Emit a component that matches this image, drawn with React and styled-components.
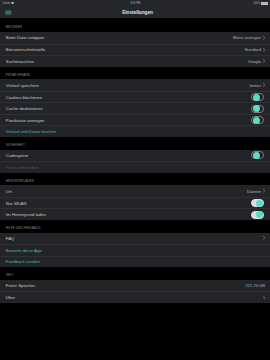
import React from "react";
import styled, { createGlobalStyle } from "styled-components";

const GlobalStyle = createGlobalStyle`
  html, body { margin: 0; padding: 0; background: #000; }
  body { font-family: "Liberation Sans", Arial, sans-serif; -webkit-font-smoothing: antialiased; }
  * { box-sizing: border-box; }
`;

const Screen = styled.div`
  width: 270px;
  height: 360px;
  background: #000;
  display: flex;
  flex-direction: column;
  overflow: hidden;
`;

const TopBar = styled.div`
  background: #24262a;
  height: 18px;
  display: flex;
  flex-direction: column;
`;

const StatusBar = styled.div`
  height: 6px;
  padding: 0 2px 0 2.5px;
  display: grid;
  grid-template-columns: 1fr auto 1fr;
  align-items: center;
  font-size: 2.6px;
  color: #bdbdbd;
`;

const StatusLeft = styled.div`
  display: flex;
  align-items: center;
  gap: 1px;
`;

const StatusRight = styled.div`
  display: flex;
  align-items: center;
  justify-content: flex-end;
  gap: 1px;
`;

const Battery = styled.div`
  width: 7px;
  height: 3px;
  border: 0.4px solid #c8c8c8;
  border-radius: 0.6px;
  padding: 0.4px;
  position: relative;
  &::before {
    content: "";
    display: block;
    width: 100%;
    height: 100%;
    background: #4cd964;
  }
  &::after {
    content: "";
    position: absolute;
    right: -1.2px;
    top: 0.7px;
    width: 0.8px;
    height: 1.2px;
    background: #c8c8c8;
  }
`;

const NavBar = styled.div`
  height: 12px;
  display: grid;
  grid-template-columns: 30px 1fr 30px;
  align-items: center;
  padding: 0 0 0 5px;
`;

const NavTitle = styled.div`
  text-align: center;
  color: #e6e6e8;
  font-size: 4.7px;
  font-weight: 600;
  margin-top: 0.5px;
`;

const Content = styled.div`
  display: flex;
  flex-direction: column;
`;

const SectionHeader = styled.div`
  height: ${(p) => (p.$first ? "14px" : "12.75px")};
  display: flex;
  align-items: flex-end;
  padding: 0 0 2.4px 5.8px;
  color: #86868a;
  font-size: 3.1px;
  letter-spacing: 0.05px;
  line-height: 3.2px;
`;

const Group = styled.div`
  background: #222428;
  display: flex;
  flex-direction: column;
`;

const Row = styled.div`
  height: 11.5px;
  display: flex;
  align-items: center;
  justify-content: space-between;
  padding: 0 5px 0 5.8px;
  font-size: 4.3px;
  border-top: ${(p) => (p.$first ? "none" : "0.5px solid #2e3034")};
`;

const Label = styled.span`
  color: ${(p) =>
    p.$tone === "link" ? "#4fb9a6" : p.$tone === "muted" ? "#55585c" : "#c9c9cc"};
`;

const Right = styled.div`
  display: flex;
  align-items: center;
  gap: 1.8px;
  color: #b0b0b3;
  font-size: 4.1px;
`;

const Chevron = styled.svg`
  width: 2.2px;
  height: 3.6px;
  display: block;
`;

const Toggle = styled.div`
  width: 13px;
  height: 8px;
  border-radius: 4px;
  border: 0.6px solid ${(p) => (p.$on ? "#dcdcdc" : "#7e8084")};
  background: ${(p) => (p.$on ? "#dcdcdc" : "#1c1e21")};
  display: flex;
  align-items: center;
  justify-content: ${(p) => (p.$on ? "flex-end" : "flex-start")};
  padding: 0.1px;
  margin-right: 0.6px;
`;

const Knob = styled.div`
  width: 7px;
  height: 7px;
  border-radius: 50%;
  background: #5adcc5;
`;

const ChevronIcon = () => (
  <Chevron viewBox="0 0 6 10">
    <path d="M1 1 L5 5 L1 9" fill="none" stroke="#bdbdc0" strokeWidth="1.3" strokeLinecap="round" strokeLinejoin="round" />
  </Chevron>
);

const MenuIcon = () => (
  <svg width="6.5" height="5" viewBox="0 0 13 10" style={{ display: "block" }}>
    <rect x="0" y="0" width="13" height="10" rx="1" fill="#2c433e" />
    <rect x="1" y="1.5" width="11" height="1.4" fill="#46877a" />
    <rect x="1" y="4.3" width="11" height="1.4" fill="#46877a" />
    <rect x="1" y="7.1" width="11" height="1.4" fill="#46877a" />
  </svg>
);

const WifiIcon = () => (
  <svg width="3.2" height="2.4" viewBox="0 0 12 9" style={{ display: "block" }}>
    <path d="M6 9 L0 2.5 A9 9 0 0 1 12 2.5 Z" fill="#bdbdbd" />
  </svg>
);

const sections = [
  {
    title: "BROWSER",
    rows: [
      { label: "Beim Datei antippen", value: "Menü anzeigen", chevron: true },
      { label: "Benutzerschnittstelle", value: "Standard", chevron: true },
      { label: "Suchmaschine", value: "Google", chevron: true },
    ],
  },
  {
    title: "PRIVATSPHÄRE",
    rows: [
      { label: "Verlauf speichern", value: "Immer", chevron: true },
      { label: "Cookies blockieren", toggle: false },
      { label: "Cache deaktivieren", toggle: false },
      { label: "Paniktaste anzeigen", toggle: false },
      { label: "Verlauf und Daten löschen", tone: "link" },
    ],
  },
  {
    title: "SICHERHEIT",
    rows: [
      { label: "Codesperre", toggle: false },
      { label: "Passcode ändern", tone: "muted" },
    ],
  },
  {
    title: "HERUNTERLADEN",
    rows: [
      { label: "Ort", value: "Dateien", chevron: true },
      { label: "Nur WLAN", toggle: true },
      { label: "Im Hintergrund laden", toggle: true },
    ],
  },
  {
    title: "HILFE UND FEEDBACK",
    rows: [
      { label: "FAQ", chevron: true },
      { label: "Bewerte diese App", tone: "link" },
      { label: "Feedback senden", tone: "link" },
    ],
  },
  {
    title: "INFO",
    rows: [
      { label: "Freier Speicher", value: "217,74 GB" },
      { label: "Über", chevron: true },
    ],
  },
];

export default function App() {
  return (
    <>
      <GlobalStyle />
      <Screen>
        <TopBar>
          <StatusBar>
            <StatusLeft>
              <span>Carrier</span>
              <WifiIcon />
            </StatusLeft>
            <span>8:53 PM</span>
            <StatusRight>
              <span>100%</span>
              <Battery />
            </StatusRight>
          </StatusBar>
          <NavBar>
            <MenuIcon />
            <NavTitle>Einstellungen</NavTitle>
            <span />
          </NavBar>
        </TopBar>
        <Content>
          {sections.map((s, si) => (
            <React.Fragment key={s.title}>
              <SectionHeader $first={si === 0}>{s.title}</SectionHeader>
              <Group>
                {s.rows.map((r, ri) => (
                  <Row key={r.label} $first={ri === 0}>
                    <Label $tone={r.tone}>{r.label}</Label>
                    {r.toggle !== undefined ? (
                      <Toggle $on={r.toggle}>
                        <Knob />
                      </Toggle>
                    ) : r.value || r.chevron ? (
                      <Right>
                        {r.value && <span>{r.value}</span>}
                        {r.chevron && <ChevronIcon />}
                      </Right>
                    ) : null}
                  </Row>
                ))}
              </Group>
            </React.Fragment>
          ))}
        </Content>
      </Screen>
    </>
  );
}
